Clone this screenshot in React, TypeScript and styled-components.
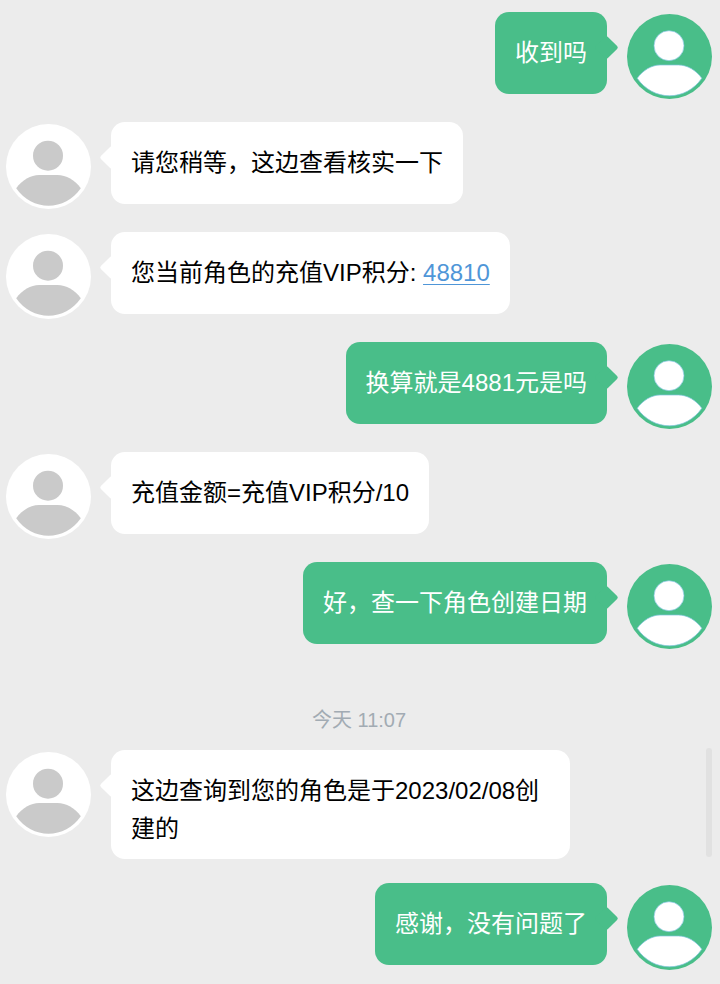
import React from "react";
import styled, { createGlobalStyle } from "styled-components";

const GlobalStyle = createGlobalStyle`
  * {
    box-sizing: border-box;
  }
  body {
    margin: 0;
    background: #ececec;
    font-family: "Liberation Sans", "Noto Sans CJK SC", sans-serif;
  }
`;

type Side = "agent" | "user";

const Page = styled.main`
  position: relative;
  padding: 12px 8px 15px 6px;
`;

const MessageList = styled.ol`
  display: flex;
  flex-direction: column;
  margin: 0;
  padding: 0;
  list-style: none;
`;

const MessageRow = styled.li<{ $side: Side }>`
  display: flex;
  flex-direction: ${({ $side }) => ($side === "user" ? "row-reverse" : "row")};
  align-items: flex-start;
  gap: 20px;
  margin-bottom: 24px;

  &:last-child {
    margin-bottom: 0;
  }
`;

const AvatarIcon = styled.svg`
  flex: none;
  width: 85px;
  height: 85px;
  margin: 2px 0 -1px;
`;

const Bubble = styled.div<{ $side: Side }>`
  position: relative;
  max-width: 65%;
  min-height: 82px;
  padding: 22px 20px 11px;
  border-radius: 14px;
  background: ${({ $side }) => ($side === "user" ? "#49be89" : "#ffffff")};
  color: ${({ $side }) => ($side === "user" ? "#ffffff" : "#000000")};
  font-size: 24px;
  line-height: 38px;

  &::before {
    content: "";
    position: absolute;
    top: 27px;
    ${({ $side }) => ($side === "user" ? "right" : "left")}: -8px;
    width: 17px;
    height: 17px;
    border-radius: 2px;
    background: inherit;
    transform: rotate(45deg);
  }
`;

const MessageText = styled.p`
  position: relative;
  margin: 0;
`;

const PointsLink = styled.a`
  color: #4f96d8;
  text-decoration: underline;
  text-decoration-thickness: 1px;
  text-underline-offset: 3px;
`;

const TimeRow = styled.li`
  padding-top: 34px;
  margin-bottom: 16px;
  color: #a2abb3;
  font-size: 20px;
  line-height: 28px;
  text-align: center;
`;

const ScrollThumb = styled.div`
  position: absolute;
  top: 76%;
  right: 8px;
  width: 6px;
  height: 109px;
  border-radius: 3px;
  background: #e1e1e1;
`;

function Avatar({ side }: { side: Side }) {
  const isUser = side === "user";
  return (
    <AvatarIcon viewBox="0 0 85 85" role="img" aria-label={isUser ? "用户" : "客服"}>
      <circle cx="42.5" cy="42.5" r="42.5" fill={isUser ? "#49be89" : "#ffffff"} />
      <g
        fill={isUser ? "#ffffff" : "#cacaca"}
        stroke={isUser ? "#7fc3de" : "none"}
        strokeWidth="0.7"
      >
        <circle cx="42" cy="31.7" r="15" />
        <path d="M10.2 64.3C16 56 25 51 33 51H51.5C60 51 69 56 74.8 64.3C67 75.5 55 81.8 42.5 81.8C30 81.8 18 75.5 10.2 64.3Z" />
      </g>
    </AvatarIcon>
  );
}

function Message({ side, children }: { side: Side; children: React.ReactNode }) {
  return (
    <MessageRow $side={side}>
      <Avatar side={side} />
      <Bubble $side={side}>
        <MessageText>{children}</MessageText>
      </Bubble>
    </MessageRow>
  );
}

export default function App() {
  return (
    <>
      <GlobalStyle />
      <Page>
        <MessageList>
          <Message side="user">收到吗</Message>
          <Message side="agent">请您稍等，这边查看核实一下</Message>
          <Message side="agent">
            您当前角色的充值VIP积分: <PointsLink href="#points">48810</PointsLink>
          </Message>
          <Message side="user">换算就是4881元是吗</Message>
          <Message side="agent">充值金额=充值VIP积分/10</Message>
          <Message side="user">好，查一下角色创建日期</Message>
          <TimeRow>
            <time>今天 11:07</time>
          </TimeRow>
          <Message side="agent">这边查询到您的角色是于2023/02/08创建的</Message>
          <Message side="user">感谢，没有问题了</Message>
        </MessageList>
        <ScrollThumb />
      </Page>
    </>
  );
}
